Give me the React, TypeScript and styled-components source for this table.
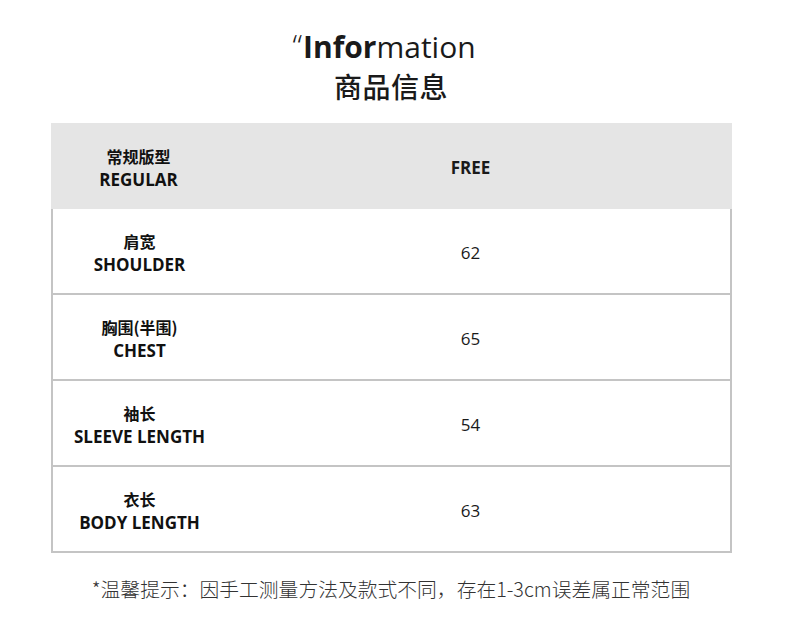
import React from 'react';
import styled, { createGlobalStyle } from 'styled-components';

const GlobalStyle = createGlobalStyle`
  html, body {
    margin: 0;
    padding: 0;
    background: #ffffff;
  }
  body {
    font-family: "Open Sans", "Noto Sans CJK SC", sans-serif;
    color: #111;
  }
`;

interface SizeRow {
  zh: string;
  en: string;
  value: string;
}

const rows: SizeRow[] = [
  { zh: '肩宽', en: 'SHOULDER', value: '62' },
  { zh: '胸围(半围)', en: 'CHEST', value: '65' },
  { zh: '袖长', en: 'SLEEVE LENGTH', value: '54' },
  { zh: '衣长', en: 'BODY LENGTH', value: '63' },
];

const App = () => {
  return (
    <Page>
      <GlobalStyle />
      <Heading>
        <Title>
          <Quote>“</Quote>
          <b>Infor</b>mation
        </Title>
        <Subtitle>商品信息</Subtitle>
      </Heading>
      <Table>
        <HeaderRow>
          <Label>
            <LabelZh>常规版型</LabelZh>
            <LabelEn>REGULAR</LabelEn>
          </Label>
          <Value bold>FREE</Value>
        </HeaderRow>
        <Body>
          {rows.map(row => (
            <BodyRow key={row.en}>
              <Label>
                <LabelZh>{row.zh}</LabelZh>
                <LabelEn>{row.en}</LabelEn>
              </Label>
              <Value>{row.value}</Value>
            </BodyRow>
          ))}
        </Body>
      </Table>
      <Note>*温馨提示：因手工测量方法及款式不同，存在1-3cm误差属正常范围</Note>
    </Page>
  );
};

const Page = styled.div`
  width: 782px;
  height: 618px;
  display: flex;
  flex-direction: column;
  align-items: center;
  padding-top: 28px;
  box-sizing: border-box;
`;

const Heading = styled.div`
  display: flex;
  flex-direction: column;
  align-items: center;
`;

const Title = styled.div`
  font-size: 30px;
  line-height: 38px;
  color: #1a1a1a;
  margin-right: 14px;
  b {
    font-weight: 700;
  }
`;

const Quote = styled.span`
  font-size: 32px;
  font-weight: 300;
  vertical-align: top;
  line-height: 34px;
  margin-right: 1px;
`;

const Subtitle = styled.div`
  font-family: "Noto Sans CJK SC", sans-serif;
  font-weight: 500;
  font-size: 28px;
  line-height: 40px;
  color: #1a1a1a;
  letter-spacing: 0.5px;
`;

const Table = styled.div`
  margin-top: 17px;
  width: 681px;
  display: flex;
  flex-direction: column;
`;

const HeaderRow = styled.div`
  height: 86px;
  background: #e5e5e5;
  display: grid;
  grid-template-columns: 176px 488px;
  align-items: center;
`;

const Body = styled.div`
  border: 2px solid #c4c4c4;
  border-top: none;
  display: flex;
  flex-direction: column;
`;

const BodyRow = styled.div`
  height: 84px;
  display: grid;
  grid-template-columns: 174px 488px;
  align-items: center;
  & + & {
    border-top: 2px solid #c4c4c4;
  }
`;

const Label = styled.div`
  display: flex;
  flex-direction: column;
  align-items: center;
  text-align: center;
  padding-top: 4px;
`;

const LabelZh = styled.div`
  font-family: "Noto Sans CJK SC", sans-serif;
  font-weight: 700;
  font-size: 16px;
  line-height: 24px;
  color: #111;
`;

const LabelEn = styled.div`
  font-weight: 700;
  font-size: 17px;
  line-height: 24px;
  color: #111;
`;

const Value = styled.div<{ bold?: boolean }>`
  text-align: center;
  font-size: 17px;
  font-weight: ${p => (p.bold ? 700 : 400)};
  color: #1a1a1a;
  padding-top: 2px;
`;

const Note = styled.div`
  margin-top: 22px;
  font-family: "Noto Sans CJK SC", sans-serif;
  font-weight: 300;
  font-size: 19.8px;
  line-height: 28px;
  color: #333;
`;

export default App;
